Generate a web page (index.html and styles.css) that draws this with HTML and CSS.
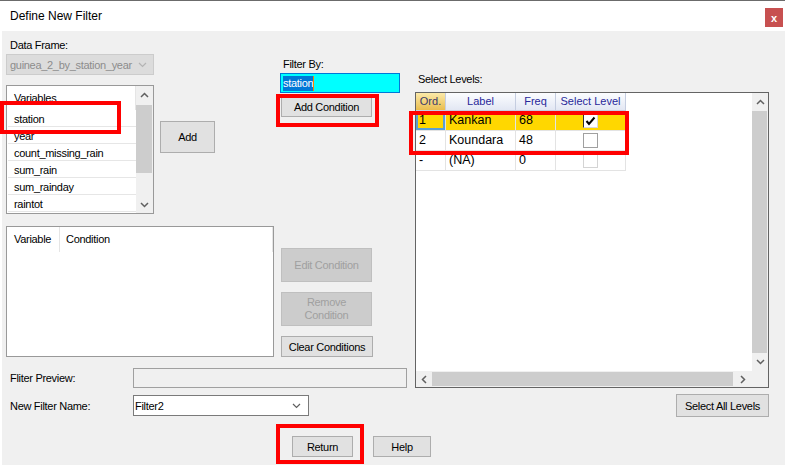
FILE: index.html
```html
<!DOCTYPE html>
<html lang="en">
<head>
    <meta charset="UTF-8">
    <title>Define New Filter</title>
    <link rel="stylesheet" href="styles.css">
</head>
<body>
    <div class="window">
        <div class="titlebar">
            <span class="title">Define New Filter</span>
            <span class="close">x</span>
        </div>

        <div class="form">
            <div class="main">
                <div class="top">
                    <!-- left column: data frame, variables, conditions -->
                    <div class="left-col">
                        <div class="label">Data Frame:</div>
                        <div class="combo combo-disabled">
                            <span>guinea_2_by_station_year</span>
                            <svg width="9" height="6"><polyline points="1,1 4.5,4.5 8,1" fill="none" stroke="#b4b4b4" stroke-width="1.2"/></svg>
                        </div>
                        <div class="var-row">
                            <div class="listbox">
                                <div class="list-inner">
                                    <div class="list-head">Variables</div>
                                    <div class="list-item">station</div>
                                    <div class="list-item">year</div>
                                    <div class="list-item">count_missing_rain</div>
                                    <div class="list-item">sum_rain</div>
                                    <div class="list-item">sum_rainday</div>
                                    <div class="list-item">raintot</div>
                                </div>
                                <div class="list-scroll">
                                    <div class="arrow-up">
                                        <svg width="9" height="6"><polyline points="1,5 4.5,1.5 8,5" fill="none" stroke="#606060" stroke-width="1.5"/></svg>
                                    </div>
                                    <div class="list-thumb"></div>
                                    <div class="arrow-down">
                                        <svg width="9" height="6"><polyline points="1,1 4.5,4.5 8,1" fill="none" stroke="#606060" stroke-width="1.5"/></svg>
                                    </div>
                                </div>
                            </div>
                            <button class="btn add-btn">Add</button>
                        </div>
                        <div class="cond-box">
                            <div class="cond-head">
                                <span class="col-var">Variable</span>
                                <span class="col-cond">Condition</span>
                            </div>
                        </div>
                    </div>

                    <!-- middle column: filter by + condition buttons -->
                    <div class="mid-col">
                        <div class="label">Filter By:</div>
                        <div class="filter-input"><span class="sel">station</span><span class="caret"></span></div>
                        <button class="btn add-cond">Add Condition</button>
                        <button class="btn btn-disabled edit-cond">Edit Condition</button>
                        <button class="btn btn-disabled remove-cond">Remove<br>Condition</button>
                        <button class="btn clear-cond">Clear Conditions</button>
                    </div>
                </div>

                <div class="bottom">
                    <div class="field-row preview-row">
                        <span class="field-label">Fliter Preview:</span>
                        <div class="preview-box"></div>
                    </div>
                    <div class="field-row name-row">
                        <span class="field-label">New Filter Name:</span>
                        <div class="combo name-combo">
                            <span>Filter2</span>
                            <svg width="9" height="6"><polyline points="1,1 4.5,4.5 8,1" fill="none" stroke="#606060" stroke-width="1.2"/></svg>
                        </div>
                    </div>
                    <div class="actions">
                        <button class="btn return-btn">Return</button>
                        <button class="btn help-btn">Help</button>
                    </div>
                </div>
            </div>

            <!-- right column: levels grid -->
            <div class="right-col">
                <div class="label">Select Levels:</div>
                <div class="grid-box">
                    <div class="levels">
                        <div class="levels-head">
                            <div class="hcell hcell-active">Ord.</div>
                            <div class="hcell">Label</div>
                            <div class="hcell">Freq</div>
                            <div class="hcell">Select Level</div>
                        </div>
                        <div class="levels-row row-selected">
                            <div class="cell cell-focus">1</div>
                            <div class="cell">Kankan</div>
                            <div class="cell">68</div>
                            <div class="cell cell-check">
                                <span class="check checked">
                                    <svg width="11" height="10"><polyline points="1.5,5 4,8 9.5,1.5" fill="none" stroke="#000" stroke-width="2"/></svg>
                                </span>
                            </div>
                        </div>
                        <div class="levels-row">
                            <div class="cell">2</div>
                            <div class="cell">Koundara</div>
                            <div class="cell">48</div>
                            <div class="cell cell-check"><span class="check"></span></div>
                        </div>
                        <div class="levels-row">
                            <div class="cell">-</div>
                            <div class="cell">(NA)</div>
                            <div class="cell">0</div>
                            <div class="cell cell-check"><span class="check check-faded"></span></div>
                        </div>
                    </div>
                    <div class="vscroll">
                        <div class="arrow-up">
                            <svg width="9" height="6"><polyline points="1,5 4.5,1.5 8,5" fill="none" stroke="#606060" stroke-width="1.5"/></svg>
                        </div>
                        <div class="vthumb"></div>
                        <div class="arrow-down">
                            <svg width="9" height="6"><polyline points="1,1 4.5,4.5 8,1" fill="none" stroke="#606060" stroke-width="1.5"/></svg>
                        </div>
                    </div>
                    <div class="hscroll">
                        <div class="arrow-left">
                            <svg width="6" height="9"><polyline points="5,1 1.5,4.5 5,8" fill="none" stroke="#606060" stroke-width="1.5"/></svg>
                        </div>
                        <div class="hthumb"></div>
                        <div class="arrow-right">
                            <svg width="6" height="9"><polyline points="1,1 4.5,4.5 1,8" fill="none" stroke="#606060" stroke-width="1.5"/></svg>
                        </div>
                    </div>
                    <div class="corner"></div>
                </div>
                <div class="select-all-row">
                    <button class="btn select-all">Select All Levels</button>
                </div>
            </div>
        </div>

        <!-- red annotation boxes -->
        <div class="mark mark-station"></div>
        <div class="mark mark-addcond"></div>
        <div class="mark mark-rows"></div>
        <div class="mark mark-return"></div>
    </div>
</body>
</html>
```

FILE: styles.css
```css
* {
    box-sizing: border-box;
}

body {
    margin: 0;
    background: #fff;
    font-family: "Liberation Sans", Arial, sans-serif;
    font-size: 11px;
    letter-spacing: -0.3px;
    color: #000;
    overflow: hidden;
}

.window {
    position: relative;
    width: 785px;
    height: 473px;
}

.titlebar {
    height: 31px;
    border-top: 1px solid #6b6b6b;
    display: flex;
    align-items: center;
    justify-content: space-between;
    padding-left: 10px;
}

.title {
    font-size: 12px;
    letter-spacing: 0;
}

.close {
    align-self: flex-start;
    margin-top: 7px;
    margin-right: 2px;
    width: 18px;
    height: 19px;
    background: #c75050;
    color: #fff;
    font-weight: bold;
    font-size: 11px;
    display: flex;
    align-items: center;
    justify-content: center;
}

.form {
    margin-left: 2px;
    width: 783px;
    height: 434px;
    background: #f0f0f0;
    display: flex;
}

.main {
    width: 408px;
    flex: none;
    display: flex;
    flex-direction: column;
}

.top {
    display: flex;
    height: 326px;
}

.label {
    height: 13px;
    line-height: 13px;
}

/* left column */
.left-col {
    margin-left: 4px;
    width: 268px;
    flex: none;
    padding-top: 8px;
    display: flex;
    flex-direction: column;
}

.left-col > .label {
    padding-left: 4px;
}

.combo {
    height: 21px;
    border: 1px solid #7a7a7a;
    background: #fff;
    display: flex;
    align-items: center;
    justify-content: space-between;
    padding: 0 6px 0 3px;
}

.combo-disabled {
    margin-top: 2px;
    width: 148px;
    background: #dcdcdc;
    border-color: #cccccc;
    color: #8c8c8c;
}

.var-row {
    display: flex;
    align-items: flex-start;
    margin-top: 10px;
}

.listbox {
    width: 148px;
    height: 129px;
    flex: none;
    border: 1px solid #999;
    background: #fff;
    display: flex;
}

.list-inner {
    flex: 1;
}

.list-head {
    height: 24px;
    line-height: 24px;
    padding-left: 7px;
    border-right: 1px solid #e5e5e5;
}

.list-item {
    height: 17px;
    line-height: 19px;
    margin-left: 1px;
    padding-left: 6px;
    border-bottom: 1px solid #e6e6e6;
}

.list-scroll {
    width: 17px;
    background: #f0f0f0;
    display: flex;
    flex-direction: column;
}

.arrow-up, .arrow-down, .arrow-left, .arrow-right {
    display: flex;
    align-items: center;
    justify-content: center;
}

.list-scroll .arrow-up {
    height: 18px;
}

.list-thumb {
    margin: 1px 1px 0 0;
    height: 68px;
    background: #cdcdcd;
}

.list-scroll .arrow-down {
    flex: 1;
    align-items: flex-end;
    padding-bottom: 5px;
}

.btn {
    flex: none;
    font: inherit;
    letter-spacing: inherit;
    color: #000;
    background: #e1e1e1;
    border: 1px solid #adadad;
    padding: 0;
}

.btn-disabled {
    background: #cccccc;
    border-color: #bfbfbf;
    color: #a0a0a0;
}

.add-btn {
    margin: 36px 0 0 6px;
    width: 55px;
    height: 32px;
}

.cond-box {
    margin-top: 12px;
    height: 131px;
    border: 1px solid #999;
    background: #fff;
}

.cond-head {
    display: flex;
    height: 25px;
}

.cond-head span {
    line-height: 25px;
    border-right: 1px solid #e5e5e5;
}

.col-var {
    width: 53px;
    padding-left: 7px;
}

.col-cond {
    width: 213px;
    padding-left: 6px;
}

/* middle column */
.mid-col {
    margin-left: 6px;
    width: 128px;
    flex: none;
    padding-top: 27px;
    display: flex;
    flex-direction: column;
    align-items: flex-start;
}

.mid-col > .label {
    padding-left: 3px;
}

.filter-input {
    margin-top: 2px;
    width: 120px;
    height: 20px;
    border: 1px solid #0078d7;
    background: #00ffff;
    display: flex;
    align-items: center;
    padding-left: 2px;
}

.sel {
    background: #0078d7;
    color: #fff;
    line-height: 15px;
}

.caret {
    width: 1px;
    height: 15px;
    background: #ff7f00;
}

.add-cond {
    margin: 4px 0 0 1px;
    width: 91px;
    height: 20px;
}

.edit-cond {
    margin: 131px 0 0 1px;
    width: 91px;
    height: 34px;
}

.remove-cond {
    margin: 10px 0 0 1px;
    width: 91px;
    height: 34px;
    line-height: 13px;
}

.clear-cond {
    margin: 10px 0 0 1px;
    width: 92px;
    height: 21px;
}

/* bottom rows */
.bottom {
    display: flex;
    flex-direction: column;
}

.field-row {
    display: flex;
    align-items: center;
    margin-left: 8px;
}

.preview-row {
    margin-top: 11px;
}

.name-row {
    margin-top: 7px;
}

.field-label {
    width: 123px;
    flex: none;
}

.preview-box {
    width: 274px;
    height: 20px;
    border: 1px solid #a0a0a0;
    background: #f0f0f0;
}

.name-combo {
    width: 176px;
    padding: 0 7px 0 1px;
}

.actions {
    display: flex;
    margin-top: 20px;
}

.return-btn {
    margin-left: 290px;
    width: 61px;
    height: 21px;
}

.help-btn {
    margin-left: 20px;
    width: 58px;
    height: 21px;
}

/* right column */
.right-col {
    width: 359px;
    flex: none;
    display: flex;
    flex-direction: column;
}

.right-col > .label {
    margin-top: 42px;
    padding-left: 8px;
}

.grid-box {
    margin: 6px 0 0 5px;
    width: 354px;
    height: 296px;
    border: 1px solid #646464;
    background: #fff;
    display: grid;
    grid-template-columns: 1fr 16px;
    grid-template-rows: 1fr 16px;
}

.levels-head, .levels-row {
    display: grid;
    grid-template-columns: 30px 70px 40px 70px;
    width: 210px;
}

.hcell {
    height: 18px;
    line-height: 17px;
    text-align: center;
    letter-spacing: 0;
    color: #28289a;
    background: linear-gradient(#fcfdff, #e2e7f3);
    border-right: 1px solid #c5cde0;
    border-bottom: 1px solid #c5cde0;
}

.hcell-active {
    color: #3a3a6a;
    background: linear-gradient(#fbe9a9, #e9bd4e);
}

.levels-row {
    font-size: 12.5px;
    letter-spacing: 0;
}

.cell {
    height: 20px;
    line-height: 19px;
    padding-left: 3px;
    border-right: 1px solid #e3e3e3;
    border-bottom: 1px solid #e3e3e3;
}

.row-selected .cell {
    background: #ffd700;
}

.cell-focus {
    box-shadow: inset 0 0 0 2px #5a9fd4;
}

.cell-check {
    display: flex;
    align-items: center;
    justify-content: center;
    padding-left: 0;
}

.check {
    width: 15px;
    height: 15px;
    border: 1px solid #a0a0a0;
    background: #fff;
    display: flex;
    align-items: center;
    justify-content: center;
}

.checked {
    border-color: #333 #d8d8d8 #d8d8d8 #333;
}

.check-faded {
    border-color: #d4d4d4;
}

.vscroll {
    background: #f0f0f0;
    display: flex;
    flex-direction: column;
}

.vscroll .arrow-up {
    height: 17px;
}

.vthumb {
    margin: 1px 1px 0 0;
    height: 242px;
    background: #cdcdcd;
}

.vscroll .arrow-down {
    flex: 1;
}

.hscroll {
    background: #f0f0f0;
    display: flex;
}

.arrow-left {
    width: 16px;
}

.hthumb {
    margin: 1px 0;
    width: 301px;
    background: #cdcdcd;
}

.arrow-right {
    flex: 1;
}

.corner {
    background: #f0f0f0;
}

.select-all-row {
    display: flex;
    justify-content: flex-end;
    margin-top: 6px;
}

.select-all {
    width: 93px;
    height: 23px;
}

/* red annotation boxes */
.mark {
    position: absolute;
    border: 4px solid #f00;
}

.mark-station {
    left: 0;
    top: 101px;
    width: 121px;
    height: 33px;
}

.mark-addcond {
    left: 276px;
    top: 94px;
    width: 103px;
    height: 33px;
}

.mark-rows {
    left: 409px;
    top: 111px;
    width: 220px;
    height: 44px;
}

.mark-return {
    left: 276px;
    top: 424px;
    width: 88px;
    height: 40px;
}
```
